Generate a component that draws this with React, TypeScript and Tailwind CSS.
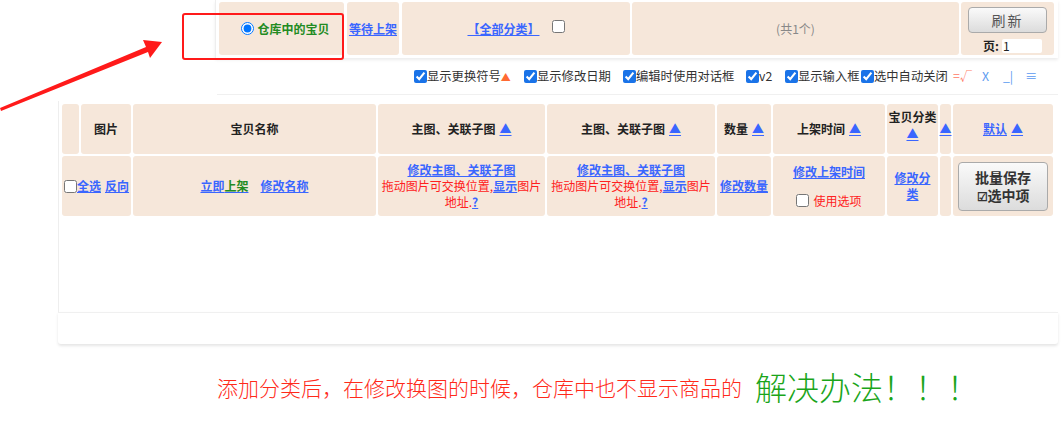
import React from 'react';

const cell = 'bg-[#f6e7da] rounded-[3px]';
const link = 'text-[#3a66ff] underline font-bold';
const tri = 'text-[#3a66ff] underline';

const Check: React.FC<{ label: string; w: string; extra?: React.ReactNode }> = ({ label, w, extra }) => (
    <label className={`flex items-center shrink-0 ${w}`}>
        <input type="checkbox" defaultChecked className="w-[13px] h-[13px] m-0 accent-[#1a73e8]" />
        <span>{label}</span>
        {extra}
    </label>
);

export default function App() {
    return (
        <div className="relative w-[1061px] h-[434px] bg-white overflow-hidden text-[12px] text-[#222]" style={{ fontFamily: '"Noto Sans CJK SC", "Liberation Sans", sans-serif' }}>
            {/* top bar */}
            <div className="ml-[215px] w-[843px] border-l border-[#eee] shadow-[0_2px_3px_rgba(0,0,0,0.08)] pl-[3px] pt-[2px] pb-[3px]">
                <div className="flex h-[53px]">
                    <div className={`${cell} w-[125px] flex items-center justify-center gap-[3px] pl-[8px]`}>
                        <input type="radio" defaultChecked className="w-[13px] h-[13px] m-0" />
                        <span className="font-bold text-[#228b22]">仓库中的宝贝</span>
                    </div>
                    <div className={`${cell} w-[52px] ml-[3px] flex items-center justify-center`}>
                        <a className={link}>等待上架</a>
                    </div>
                    <div className={`${cell} w-[228px] ml-[3px] flex items-center justify-center gap-[12px]`}>
                        <a className={link}>【全部分类】</a>
                        <input type="checkbox" className="w-[13px] h-[13px] m-0 -mt-[4px]" />
                    </div>
                    <div className={`${cell} w-[327px] ml-[2px] flex items-center justify-center text-[#888]`}>(共1个)</div>
                    <div className={`${cell} w-[93px] ml-[2px] flex flex-col items-center pt-[5px]`}>
                        <button className="w-[79px] h-[28px] rounded-[4px] border border-[#aaa] bg-gradient-to-b from-[#fafafa] to-[#dcdcdc] text-[14px] text-[#555] tracking-[2px]">刷新</button>
                        <div className="self-start flex items-center mt-[4px] ml-[22px] font-bold">
                            <span>页:</span>
                            <span className="ml-[3px] w-[40px] h-[14px] bg-white rounded-[2px] leading-[14px] font-normal pl-[1px]">1</span>
                        </div>
                    </div>
                </div>
            </div>

            {/* options */}
            <div className="ml-[217px] w-[841px] h-[37px] pt-[1px] border-b border-[#f0f0f0] flex items-center pl-[197px] text-[12.3px] text-[#333] whitespace-nowrap">
                <Check w="w-[110px]" label="显示更换符号" extra={<span className="text-[#ff6a33] text-[10px]">▲</span>} />
                <Check w="w-[99px]" label="显示修改日期" />
                <Check w="w-[123px]" label="编辑时使用对话框" />
                <Check w="w-[39px]" label="v2" />
                <Check w="w-[76px]" label="显示输入框" />
                <Check w="w-[92px]" label="选中自动关闭" />
                <span className="text-[#ff7a66] w-[29px] shrink-0">=√</span>
                <span className="text-[#5a9af0] w-[21px] shrink-0">X</span>
                <span className="text-[#5a9af0] w-[22px] shrink-0">_|</span>
                <span className="text-[#5a9af0]">≡</span>
            </div>

            {/* table */}
            <div className="ml-[58px] w-[1000px] mt-[6px]">
                <div className="border-l border-[#eee] h-[211px] pl-[3px] pt-[3px]">
                    <div className="grid grid-cols-[17px_50px_243px_167px_168px_54px_112px_51px_11px_100px] grid-rows-[50px_60px] gap-[2px] text-center">
                        <div className={cell}></div>
                        <div className={`${cell} flex items-center justify-center font-bold`}>图片</div>
                        <div className={`${cell} flex items-center justify-center font-bold`}>宝贝名称</div>
                        <div className={`${cell} flex items-center justify-center font-bold gap-[4px]`}>主图、关联子图<a className={tri}>▲</a></div>
                        <div className={`${cell} flex items-center justify-center font-bold gap-[4px]`}>主图、关联子图<a className={tri}>▲</a></div>
                        <div className={`${cell} flex items-center justify-center font-bold gap-[4px]`}>数量<a className={tri}>▲</a></div>
                        <div className={`${cell} flex items-center justify-center font-bold gap-[4px]`}>上架时间<a className={tri}>▲</a></div>
                        <div className={`${cell} flex flex-col items-center justify-center font-bold leading-[17px]`}>
                            <span className="-mt-[8px]">宝贝分类</span>
                            <a className={tri}>▲</a>
                        </div>
                        <div className={`${cell} flex items-center justify-center`}><a className={tri}>▲</a></div>
                        <div className={`${cell} flex items-center justify-center gap-[4px]`}><a className={link}>默认</a><a className={tri}>▲</a></div>

                        <div className={`${cell} col-span-2 flex items-center justify-center`}>
                            <input type="checkbox" className="w-[13px] h-[13px] m-0" />
                            <a className={link}>全选</a>
                            <a className={`${link} ml-[4px]`}>反向</a>
                        </div>
                        <div className={`${cell} flex items-center justify-center gap-[12px]`}>
                            <a className="underline font-bold decoration-[#3a66ff]"><span className="text-[#3a66ff]">立即</span><span className="text-[#228b22] decoration-[#228b22]">上架</span></a>
                            <a className={link}>修改名称</a>
                        </div>
                        {[0, 1].map(i => (
                            <div key={i} className={`${cell} flex flex-col items-center justify-center leading-[16px] pb-[1px]`}>
                                <a className={link}>修改主图、关联子图</a>
                                <div className="text-[#ff2020]">拖动图片可交换位置,<a className={link}>显示</a>图片</div>
                                <div className="text-[#ff2020]">地址.<a className={link}>?</a></div>
                            </div>
                        ))}
                        <div className={`${cell} flex items-center justify-center`}><a className={link}>修改数量</a></div>
                        <div className={`${cell} flex flex-col items-center justify-center gap-[11px]`}>
                            <a className={link}>修改上架时间</a>
                            <label className="flex items-center gap-[4px] text-[#ff2020]">
                                <input type="checkbox" className="w-[13px] h-[13px] m-0" />使用选项
                            </label>
                        </div>
                        <div className={`${cell} flex items-center justify-center px-[3px] leading-[16px]`}><a className={link}>修改分类</a></div>
                        <div className={cell}></div>
                        <div className={`${cell} flex items-center justify-center`}>
                            <button className="w-[90px] h-[49px] rounded-[4px] border border-[#aaa] bg-gradient-to-b from-[#fafafa] to-[#dcdcdc] text-[14px] font-bold text-[#333] leading-[18px] flex flex-col items-center justify-center">
                                <span>批量保存</span>
                                <span><span className="text-[12px]">☑</span>选中项</span>
                            </button>
                        </div>
                    </div>
                </div>
                <div className="h-[32px] border-t border-[#f0f0f0] rounded-b-[3px] shadow-[0_2px_3px_rgba(0,0,0,0.1)]"></div>
            </div>

            {/* note */}
            <div className="flex items-center h-[40px] pl-[217px] mt-[22px]" style={{ fontFamily: '"Noto Sans CJK SC", sans-serif' }}>
                <span className="text-[#ff2a1a] text-[21px] font-light leading-[28px] mt-[2px]">添加分类后，在修改换图的时候，仓库中也不显示商品的</span>
                <span className="text-[#1aa51a] text-[32px] font-light leading-[40px] ml-[13px]">解决办法！！！</span>
            </div>

            {/* annotations */}
            <div className="absolute left-[182px] top-[13px] w-[162px] h-[47px] border-2 border-[#ff1a1a] rounded-[3px]"></div>
            <svg className="absolute left-0 top-0" width="170" height="115" viewBox="0 0 170 115">
                <polygon points="0,108 146,47 143,40 162,42 150,58 148,52 1,111" fill="#ff1a1a" />
            </svg>
        </div>
    );
}
